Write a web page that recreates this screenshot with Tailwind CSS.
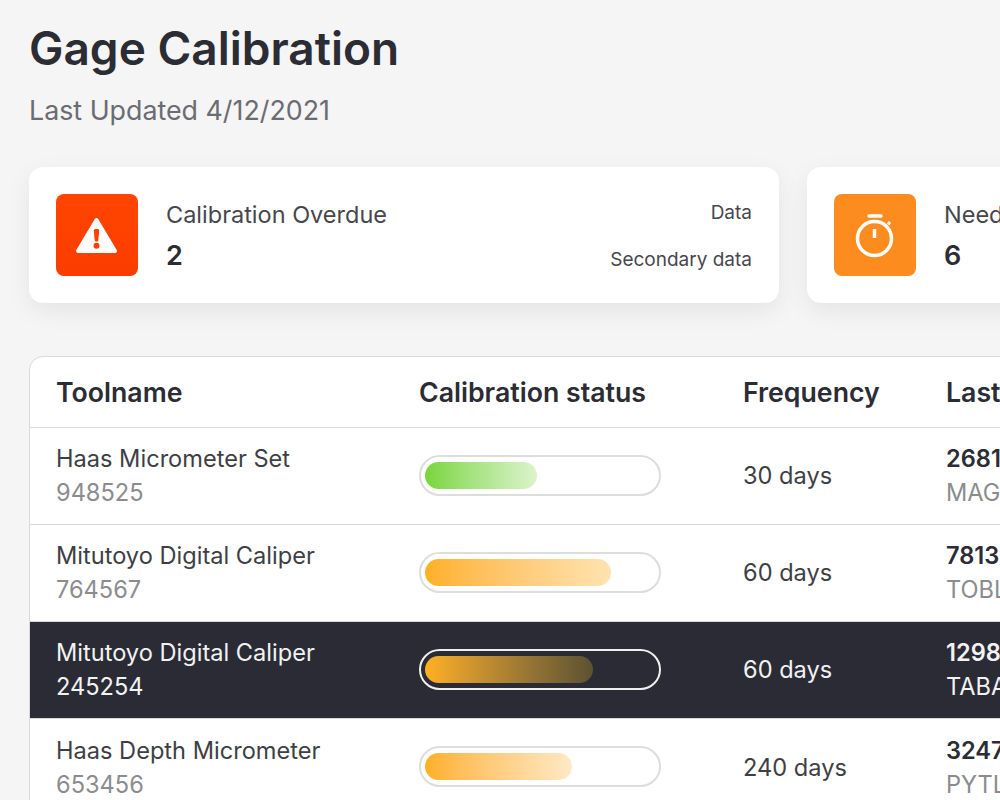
<!DOCTYPE html>
<html lang="en">
<head>
    <meta charset="UTF-8">
    <meta name="viewport" content="width=device-width, initial-scale=1.0">
    <title>Gage Calibration</title>
    <script src="https://cdn.jsdelivr.net/npm/@tailwindcss/browser@4"></script>
</head>
<body class="h-[800px] overflow-hidden bg-[#f5f5f5] font-['Inter',sans-serif] text-[#2b2c34]">
    <div class="w-[1400px] pl-[29px] pt-[20px]">
        <!-- Header -->
        <h1 class="text-[46px] leading-[56px] font-semibold">Gage Calibration</h1>
        <p class="mt-[18px] text-[26.800px] leading-[32px] text-[#6b6c72]">Last Updated 4/12/2021</p>

        <!-- Summary cards -->
        <div class="mt-[41px] flex gap-[28px]">
            <div class="flex h-[136px] w-[750px] items-center rounded-[14px] bg-white px-[27px] shadow-[0_8px_24px_rgba(0,0,0,0.07)]">
                <div class="flex h-[82px] w-[82px] shrink-0 items-center justify-center rounded-[8px] bg-gradient-to-b from-[#ff4500] to-[#fb3c00]">
                    <svg width="42" height="38" viewBox="0 0 42 38"><path d="M20.500 4 L39 35 H2 Z" fill="#fff" stroke="#fff" stroke-width="4" stroke-linejoin="round"/><path d="M17.800 14.500 Q17.800 13 19.300 13 H21.700 Q23.200 13 23.200 14.500 L22.300 24.500 Q22.200 25.500 21.200 25.500 H19.800 Q18.800 25.500 18.700 24.500 Z" fill="#fb4100"/><circle cx="20.500" cy="29.700" r="3" fill="#fb4100"/></svg>
                </div>
                <div class="ml-[28px] flex-1">
                    <p class="text-[23.500px] leading-[30px] text-[#46474d]">Calibration Overdue</p>
                    <p class="mt-[11px] text-[27px] leading-[30px] font-semibold">2</p>
                </div>
                <div class="pt-[2px] text-right text-[19px] leading-[24px] text-[#46474d]">
                    <p>Data</p>
                    <p class="mt-[23px]">Secondary data</p>
                </div>
            </div>
            <div class="flex h-[136px] w-[500px] items-center rounded-[14px] bg-white px-[27px] shadow-[0_8px_24px_rgba(0,0,0,0.07)]">
                <div class="flex h-[82px] w-[82px] shrink-0 items-center justify-center rounded-[8px] bg-[#fc8c1e]">
                    <svg width="42" height="46" viewBox="0 0 42 46" fill="none" stroke="#fff"><circle cx="20.500" cy="26.500" r="17" stroke-width="3.500"/><path d="M15 4 H27" stroke-width="3.500" stroke-linecap="round"/><path d="M20.500 17 V26" stroke-width="3.500"/><path d="M34 12.500 L36 10" stroke-width="3"/></svg>
                </div>
                <div class="ml-[28px] flex-1">
                    <p class="text-[23.500px] leading-[30px] text-[#46474d]">Needs Calibration</p>
                    <p class="mt-[11px] text-[27px] leading-[30px] font-semibold">6</p>
                </div>
            </div>
        </div>

        <!-- Table -->
        <div class="mt-[53px] w-[1300px] rounded-t-[14px] border border-[#d9d9d9] bg-white">
            <div class="flex h-[71px] items-center border-b border-[#d9d9d9] pl-[26px] pt-[1px] text-[26.700px] font-semibold">
                <div class="w-[363px]">Toolname</div>
                <div class="w-[324px]">Calibration status</div>
                <div class="w-[203px]">Frequency</div>
                <div>Last Calibrated</div>
            </div>

            <div class="flex h-[97px] items-center border-b border-[#d8d8d8] pl-[26px] text-[23.600px]">
                <div class="w-[363px] text-[#3e3f45]">
                    <p class="leading-[34px]">Haas Micrometer Set</p>
                    <p class="leading-[34px] text-[#8c8c8f]">948525</p>
                </div>
                <div class="w-[324px]">
                    <div class="mb-[2px] flex h-[41px] w-[242px] items-center rounded-full border-2 border-[#dddddd] px-[4px]">
                        <div class="h-[27px] w-[112px] rounded-full bg-gradient-to-r from-[#7ad536] to-[#dcf3cb]"></div>
                    </div>
                </div>
                <div class="w-[203px] text-[#3e3f45]">30 days</div>
                <div>
                    <p class="leading-[34px] font-semibold">26813</p>
                    <p class="leading-[34px] text-[#8c8c8f]">MAGNUM</p>
                </div>
            </div>

            <div class="flex h-[97px] items-center border-b border-[#d8d8d8] pl-[26px] text-[23.600px]">
                <div class="w-[363px] text-[#3e3f45]">
                    <p class="leading-[34px]">Mitutoyo Digital Caliper</p>
                    <p class="leading-[34px] text-[#8c8c8f]">764567</p>
                </div>
                <div class="w-[324px]">
                    <div class="mb-[2px] flex h-[41px] w-[242px] items-center rounded-full border-2 border-[#dddddd] px-[4px]">
                        <div class="h-[27px] w-[186px] rounded-full bg-gradient-to-r from-[#ffb020] to-[#ffe3b0]"></div>
                    </div>
                </div>
                <div class="w-[203px] text-[#3e3f45]">60 days</div>
                <div>
                    <p class="leading-[34px] font-semibold">78134</p>
                    <p class="leading-[34px] text-[#8c8c8f]">TOBLER</p>
                </div>
            </div>

            <div class="flex h-[97px] items-center border-b border-[#d8d8d8] bg-[#2a2b35] pl-[26px] text-[23.600px] text-[#f2f2f2]">
                <div class="w-[363px]">
                    <p class="leading-[34px]">Mitutoyo Digital Caliper</p>
                    <p class="leading-[34px]">245254</p>
                </div>
                <div class="w-[324px]">
                    <div class="mb-[2px] flex h-[41px] w-[242px] items-center rounded-full border-2 border-[#f0f0f0] px-[4px]">
                        <div class="h-[27px] w-[168px] rounded-full bg-gradient-to-r from-[#ffb020] to-[#5c5231]"></div>
                    </div>
                </div>
                <div class="w-[203px]">60 days</div>
                <div>
                    <p class="leading-[34px] font-semibold">12984</p>
                    <p class="leading-[34px]">TABATA</p>
                </div>
            </div>

            <div class="flex h-[97px] items-center pl-[26px] text-[23.600px]">
                <div class="w-[363px] text-[#3e3f45]">
                    <p class="leading-[34px]">Haas Depth Micrometer</p>
                    <p class="leading-[34px] text-[#8c8c8f]">653456</p>
                </div>
                <div class="w-[324px]">
                    <div class="mb-[2px] flex h-[41px] w-[242px] items-center rounded-full border-2 border-[#dddddd] px-[4px]">
                        <div class="h-[27px] w-[147px] rounded-full bg-gradient-to-r from-[#ffb020] to-[#ffe9c4]"></div>
                    </div>
                </div>
                <div class="w-[203px] text-[#3e3f45]">240 days</div>
                <div>
                    <p class="leading-[34px] font-semibold">32475</p>
                    <p class="leading-[34px] text-[#8c8c8f]">PYTLIK</p>
                </div>
            </div>
        </div>
    </div>
</body>
</html>
